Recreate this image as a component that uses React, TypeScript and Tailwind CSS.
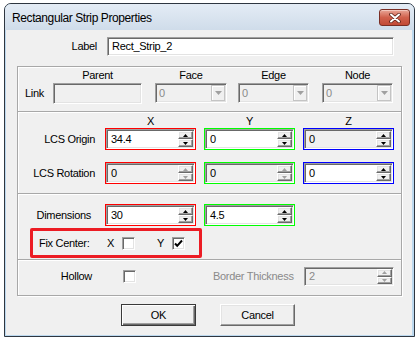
import React from 'react'

const sunken =
  'border border-t-[#a0a0a0] border-l-[#a0a0a0] border-b-white border-r-white shadow-[inset_1px_1px_0_#696969,inset_-1px_-1px_0_#e3e3e3]'
const raised =
  'border border-t-white border-l-white border-b-[#696969] border-r-[#696969] shadow-[inset_-1px_-1px_0_#a0a0a0,inset_1px_1px_0_#e3e3e3]'

function Arrow({ up, disabled }: { up: boolean; disabled?: boolean }) {
  return (
    <svg width="5" height="3" viewBox="0 0 5 3">
      <path d={up ? 'M0 3h5L2.5 0z' : 'M0 0h5L2.5 3z'} fill={disabled ? '#a0a0a0' : '#000'} />
    </svg>
  )
}

function SpinButtons({ disabled }: { disabled?: boolean }) {
  return (
    <div className="flex h-full w-[16px] flex-col py-[1px] pr-[1px]">
      <div className={`flex h-[8px] items-center justify-center bg-[#f0f0f0] ${raised}`}>
        <Arrow up disabled={disabled} />
      </div>
      <div className={`flex h-[8px] items-center justify-center bg-[#f0f0f0] ${raised}`}>
        <Arrow up={false} disabled={disabled} />
      </div>
    </div>
  )
}

function Spin({
  value,
  ring,
  grey,
  disabled,
}: {
  value: string
  ring: string
  grey?: boolean
  disabled?: boolean
}) {
  return (
    <div className={`h-[22px] w-[91px] border ${ring}`}>
      <div className={`flex h-full items-center ${sunken} ${grey ? 'bg-[#f0f0f0]' : 'bg-white'}`}>
        <span className="flex-1 pl-[4px] text-black">{value}</span>
        <SpinButtons disabled={disabled} />
      </div>
    </div>
  )
}

function Combo() {
  return (
    <div className={`flex h-[20px] items-center bg-[#f0f0f0] ${sunken}`}>
      <span className="flex-1 pl-[3px] text-[#8a8a8a]">0</span>
      <div className="mr-[1px] flex h-[16px] w-[14px] items-center justify-center border border-[#c4c4c4] bg-[#f0f0f0] shadow-[inset_1px_1px_0_#fff]">
        <svg width="7" height="4" viewBox="0 0 7 4">
          <path d="M0 0h7L3.5 4z" fill="#a0a0a0" />
        </svg>
      </div>
    </div>
  )
}

function Check({ checked }: { checked?: boolean }) {
  return (
    <div className={`flex h-[13px] w-[13px] items-center justify-center bg-white ${sunken}`}>
      {checked && (
        <svg width="9" height="9" viewBox="0 0 9 9">
          <path d="M1 4.5l2.2 2.3L8 1.5" fill="none" stroke="#000" strokeWidth="2" />
        </svg>
      )}
    </div>
  )
}

function Divider() {
  return <div className="h-[2px] border-t border-t-[#a8a8a8] bg-white" />
}

export default function App() {
  return (
    <div className="h-[342px] w-[420px] bg-white pl-[4px] pt-[3px] font-['Liberation_Sans',Arial,sans-serif] text-[11px] tracking-[-0.3px] text-black">
      <div className="flex h-[334px] w-[411px] flex-col overflow-hidden rounded-t-[7px] border border-[#2e3640] bg-[#bcd8ee]">
        {/* title bar */}
        <div className="flex h-[26px] shrink-0 items-start bg-gradient-to-b from-[#e4ecf5] to-[#cfdcea]">
          <span className="mt-[5px] flex-1 pl-[7px] text-[12px] tracking-[-0.4px] text-black">
            Rectangular Strip Properties
          </span>
          <div className="mr-[4px] mt-[5px] flex h-[17px] w-[31px] items-center justify-center rounded-[3px] border border-[#7a2e24] bg-gradient-to-b from-[#e8a597] via-[#d0604c] to-[#c24a36] shadow-[inset_0_1px_0_#f3c6bc]">
            <svg width="12" height="10" viewBox="0 0 12 10">
              <path d="M2 1.5l8 7M10 1.5l-8 7" stroke="#5a2018" strokeWidth="3.6" strokeLinecap="round" />
              <path d="M2 1.5l8 7M10 1.5l-8 7" stroke="#fff" strokeWidth="2" strokeLinecap="round" />
            </svg>
          </div>
        </div>

        <div className="flex flex-1 pb-[1px] pl-[1px] pr-[2px]">
          <div className="flex-1 bg-[#f0f0f0]">
            {/* label row */}
            <div className="mt-[7px] flex h-[19px] items-center">
              <span className="w-[91px] text-right">Label</span>
              <div className={`ml-[10px] flex h-[19px] w-[287px] items-center bg-white ${sunken}`}>
                <span className="pl-[4px]">Rect_Strip_2</span>
              </div>
            </div>

            {/* group */}
            <div className="ml-[11px] mt-[10px] w-[385px] border border-[#a8a8a8] shadow-[inset_1px_1px_0_#fff,1px_1px_0_#fff]">
              {/* link */}
              <div className="flex h-[44px] pt-[2px]">
                <div className="flex w-[35px] flex-col">
                  <div className="h-[13px]" />
                  <div className="mt-[1px] flex h-[21px] items-center pl-[7px]">Link</div>
                </div>
                <div className="flex w-[89px] flex-col">
                  <div className="h-[13px] text-center leading-[13px]">Parent</div>
                  <div className={`mt-[1px] h-[21px] bg-[#f0f0f0] ${sunken}`} />
                </div>
                <div className="ml-[13px] flex w-[72px] flex-col">
                  <div className="h-[13px] text-center leading-[13px]">Face</div>
                  <div className="mt-[1px]">
                    <Combo />
                  </div>
                </div>
                <div className="ml-[11px] flex w-[71px] flex-col">
                  <div className="h-[13px] text-center leading-[13px]">Edge</div>
                  <div className="mt-[1px]">
                    <Combo />
                  </div>
                </div>
                <div className="ml-[13px] flex w-[71px] flex-col">
                  <div className="h-[13px] text-center leading-[13px]">Node</div>
                  <div className="mt-[1px]">
                    <Combo />
                  </div>
                </div>
              </div>
              <Divider />

              {/* LCS */}
              <div className="h-[80px] pt-[2px]">
                <div className="flex h-[13px] gap-[8px] pl-[87px] leading-[13px]">
                  <div className="w-[91px] text-center">X</div>
                  <div className="w-[91px] text-center">Y</div>
                  <div className="w-[91px] text-center">Z</div>
                </div>
                <div className="flex h-[22px] items-center">
                  <span className="w-[77px] text-right">LCS Origin</span>
                  <div className="ml-[10px] flex gap-[8px]">
                    <Spin value="34.4" ring="border-[#ff0000]" />
                    <Spin value="0" ring="border-[#00ff00]" />
                    <Spin value="0" ring="border-[#0000ff]" grey />
                  </div>
                </div>
                <div className="mt-[12px] flex h-[22px] items-center">
                  <span className="w-[77px] text-right">LCS Rotation</span>
                  <div className="ml-[10px] flex gap-[8px]">
                    <Spin value="0" ring="border-[#ff0000]" grey disabled />
                    <Spin value="0" ring="border-[#00ff00]" grey disabled />
                    <Spin value="0" ring="border-[#0000ff]" />
                  </div>
                </div>
              </div>
              <Divider />

              {/* dimensions */}
              <div className="h-[64px] pt-[9px]">
                <div className="flex h-[22px] items-center">
                  <span className="w-[77px] pr-[4px] text-right">Dimensions</span>
                  <div className="ml-[10px] flex gap-[8px]">
                    <Spin value="30" ring="border-[#ff0000]" />
                    <Spin value="4.5" ring="border-[#00ff00]" />
                  </div>
                </div>
                <div className="ml-[12px] mt-[2px] flex h-[30px] w-[172px] items-center rounded-[2px] border-[3px] border-[#ec1c24] pl-[6px]">
                  <span className="w-[68px]">Fix Center:</span>
                  <span className="w-[15px]">X</span>
                  <Check />
                  <span className="ml-[22px] w-[15px]">Y</span>
                  <Check checked />
                </div>
              </div>
              <Divider />

              {/* hollow */}
              <div className="h-[34px] pt-[6px]">
                <div className="flex h-[19px] items-center">
                  <span className="w-[77px] pr-[3px] text-right">Hollow</span>
                  <div className="ml-[28px]">
                    <Check />
                  </div>
                  <span className="ml-[77px] w-[91px] text-[#8a8a8a]">Border Thickness</span>
                  <div className={`flex h-[19px] w-[90px] items-center bg-[#f0f0f0] ${sunken}`}>
                    <span className="flex-1 pl-[4px] text-[#8a8a8a]">2</span>
                    <SpinButtons disabled />
                  </div>
                </div>
              </div>
            </div>

            {/* buttons */}
            <div className="mt-[8px] flex h-[22px] gap-[24px] pl-[115px]">
              <button className="h-[22px] w-[75px] border border-[#3a3a3a] bg-[#f0f0f0] shadow-[inset_1px_1px_0_#fff,inset_-1px_-1px_0_#696969,inset_-2px_-2px_0_#a0a0a0]">
                OK
              </button>
              <button className={`h-[22px] w-[75px] bg-[#f0f0f0] ${raised}`}>Cancel</button>
            </div>
          </div>
        </div>
      </div>
    </div>
  )
}
